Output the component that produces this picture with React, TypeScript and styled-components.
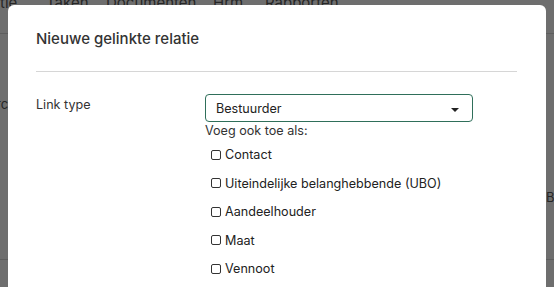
import React from "react";
import styled, { createGlobalStyle } from "styled-components";

const Global = createGlobalStyle`
  html, body { margin: 0; padding: 0; }
  body {
    width: 554px; height: 287px; overflow: hidden;
    background: #6e6e6e;
    font-family: Inter, "Noto Sans", sans-serif;
  }
`;

const Page = styled.div`
  position: relative;
  width: 554px;
  height: 287px;
  overflow: hidden;
`;

const NavBar = styled.div`
  display: flex;
  height: 33px;
  border-bottom: 1px solid #5e5e5e;
  font-size: 15px;
  color: #262626;
`;

const NavItem = styled.span<{ $w: number }>`
  width: ${(p) => p.$w}px;
  margin-top: -7px;
  white-space: nowrap;
`;

const SideText = styled.span<{ $left: number; $top: number }>`
  position: absolute;
  left: ${(p) => p.$left}px;
  top: ${(p) => p.$top}px;
  font-size: 13px;
  color: #262626;
`;

const BottomLine = styled.div`
  position: absolute;
  left: 0;
  right: 0;
  top: 259px;
  border-top: 1px solid #5e5e5e;
`;

const Modal = styled.div`
  position: absolute;
  left: 8px;
  top: 5px;
  width: 538px;
  height: 320px;
  background: #fff;
  border-radius: 6px;
  padding: 0 29px 0 28px;
  box-sizing: border-box;
  display: flex;
  flex-direction: column;
`;

const Title = styled.h2`
  margin: 0;
  padding: 24px 0 0;
  height: 67px;
  box-sizing: border-box;
  font-size: 15px;
  font-weight: 500;
  color: #333;
  line-height: 20px;
  border-bottom: 1px solid #d6d6d6;
`;

const FormRow = styled.div`
  display: flex;
  padding-top: 22px;
`;

const Label = styled.div`
  width: 169px;
  font-size: 12.6px;
  color: #333;
  line-height: 16px;
  padding-top: 3px;
`;

const Field = styled.div`
  display: flex;
  flex-direction: column;
`;

const Select = styled.div`
  width: 268px;
  height: 28px;
  box-sizing: border-box;
  border: 1px solid #2f6f5a;
  border-radius: 4px;
  display: flex;
  align-items: center;
  justify-content: space-between;
  padding: 0 13px 0 10px;
  font-size: 12.6px;
  color: #222;
`;

const Caret = styled.span`
  width: 0;
  height: 0;
  border-left: 4px solid transparent;
  border-right: 4px solid transparent;
  border-top: 4px solid #222;
  margin-top: 3px;
`;

const Hint = styled.div`
  font-size: 12.6px;
  color: #333;
  line-height: 16px;
  margin-top: 1px;
`;

const CheckList = styled.div`
  display: flex;
  flex-direction: column;
  gap: 12.5px;
  margin-top: 8px;
  padding-left: 6px;
`;

const CheckRow = styled.label`
  display: flex;
  align-items: center;
  gap: 4px;
  font-size: 12.6px;
  color: #222;
  line-height: 16px;
`;

const Box = styled.span`
  width: 8px;
  height: 8px;
  border: 1px solid #333;
  border-radius: 2px;
  margin-top: -1px;
`;

const options = [
  "Contact",
  "Uiteindelijke belanghebbende (UBO)",
  "Aandeelhouder",
  "Maat",
  "Vennoot",
];

export default function App() {
  return (
    <Page>
      <Global />
      <NavBar>
        <NavItem $w={46}>tie</NavItem>
        <NavItem $w={60}>Taken</NavItem>
        <NavItem $w={107}>Documenten</NavItem>
        <NavItem $w={52}>Hrm</NavItem>
        <NavItem $w={100}>Rapporten</NavItem>
      </NavBar>
      <SideText $left={-4} $top={96}>rc</SideText>
      <SideText $left={546} $top={189}>BC</SideText>
      <BottomLine />
      <Modal>
        <Title>Nieuwe gelinkte relatie</Title>
        <FormRow>
          <Label>Link type</Label>
          <Field>
            <Select>
              <span>Bestuurder</span>
              <Caret />
            </Select>
            <Hint>Voeg ook toe als:</Hint>
            <CheckList>
              {options.map((o) => (
                <CheckRow key={o}>
                  <Box />
                  {o}
                </CheckRow>
              ))}
            </CheckList>
          </Field>
        </FormRow>
      </Modal>
    </Page>
  );
}
